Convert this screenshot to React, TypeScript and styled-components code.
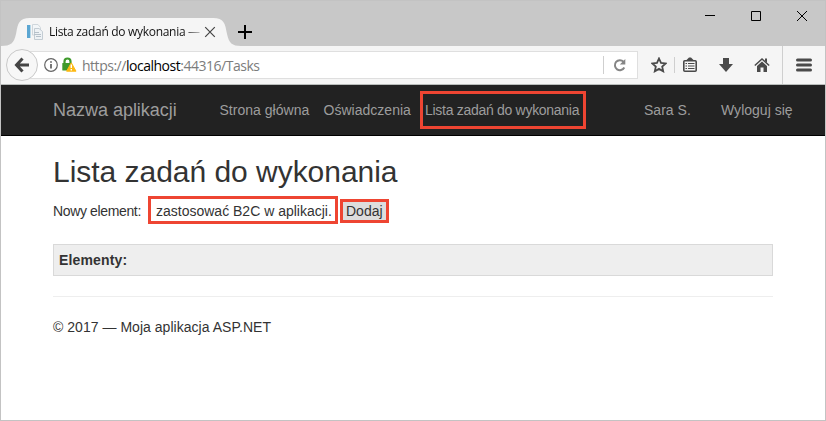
import React from "react";
import styled, { createGlobalStyle } from "styled-components";

const Global = createGlobalStyle`
  * { box-sizing: border-box; }
  body { margin: 0; background: #fff; }
`;

const Window = styled.div`
  width: 826px;
  height: 421px;
  border: 1px solid #c3c3c3;
  background: #fff;
  overflow: hidden;
  display: flex;
  flex-direction: column;
  font-family: "Liberation Sans", Arial, sans-serif;
  font-size: 14px;
  line-height: 20px;
  color: #333;
`;

const TitleBar = styled.div`
  height: 45px;
  flex: none;
  background: #c8c8c8;
  display: flex;
  align-items: flex-end;
`;

const Tab = styled.div`
  position: relative;
  width: 240px;
  height: 28px;
  display: flex;
  align-items: center;
  padding-left: 26px;
`;

const TabShape = styled.svg`
  position: absolute;
  inset: 0;
`;

const TabContent = styled.div`
  position: relative;
  display: flex;
  align-items: center;
`;

const TabTitle = styled.span`
  width: 155px;
  margin-left: 6px;
  white-space: nowrap;
  font: 12px/20px "Open Sans", "Noto Sans", sans-serif;
  letter-spacing: -0.3px;
  color: #111;
  mask-image: linear-gradient(to right, #000 134px, transparent 158px);
`;

const NewTab = styled.svg`
  margin: 0 0 6px -4px;
`;

const WindowControls = styled.div`
  margin-left: auto;
  align-self: flex-start;
  display: flex;
  gap: 34px;
  padding: 9px 17px 0 0;
`;

const Toolbar = styled.div`
  height: 38px;
  flex: none;
  background: #f5f5f5;
  display: flex;
  align-items: center;
  padding-left: 5px;
`;

const BackButton = styled.div`
  position: relative;
  z-index: 1;
  width: 32px;
  height: 32px;
  flex: none;
  border-radius: 50%;
  border: 1px solid #c9c9c9;
  background: #f7f7f7;
  display: flex;
  align-items: center;
  justify-content: center;
`;

const AddressBar = styled.div`
  width: 616px;
  height: 28px;
  flex: none;
  margin-left: -16px;
  padding-left: 21px;
  background: #fff;
  border: 1px solid #dfdfdf;
  display: flex;
  align-items: center;
`;

const LockIcon = styled.svg`
  margin-left: 3px;
`;

const Url = styled.span`
  margin-left: 5px;
  flex: 1;
  font: 14px/20px "Open Sans", "Noto Sans", sans-serif;
  letter-spacing: -0.48px;
  color: #7c7c7c;
  white-space: nowrap;
  padding-top: 2px;
`;

const Host = styled.span`
  color: #000;
`;

const Divider = styled.span<{ $h: number }>`
  width: 1px;
  flex: none;
  height: ${(p) => p.$h}px;
  background: #cfcfcf;
`;

const Reload = styled.svg`
  margin: 0 9px 0 8px;
`;

const Actions = styled.div`
  flex: 1;
  height: 100%;
  display: flex;
  align-items: center;
  padding: 0 13px;
`;

const ActionGroup = styled.div<{ $gap: number; $pad: string }>`
  display: flex;
  gap: ${(p) => p.$gap}px;
  padding: ${(p) => p.$pad};
`;

const NavBar = styled.nav`
  height: 52px;
  flex: none;
  background: #222;
  border-top: 1px solid #b9bdbb;
  border-bottom: 1px solid #000;
  display: flex;
  align-items: center;
  padding-left: 52px;
  color: #9d9d9d;
  white-space: nowrap;
`;

const Brand = styled.span`
  width: 166.5px;
  font-size: 18px;
  letter-spacing: -0.02px;
`;

const NavItem = styled.span<{ $w: number }>`
  width: ${(p) => p.$w}px;
  letter-spacing: 0.02px;
`;

const Highlight = styled.span<{ $w: number; $h: number }>`
  width: ${(p) => p.$w}px;
  height: ${(p) => p.$h}px;
  flex: none;
  border: 3px solid #ee4532;
  display: flex;
  align-items: center;
  white-space: nowrap;
`;

const NavHighlight = styled(Highlight)`
  padding-left: 2px;
  margin-right: 58px;
  letter-spacing: -0.29px;
`;

const Main = styled.main`
  width: 720px;
  margin-left: 52px;
`;

const Heading = styled.h1`
  margin: 19px 0 0;
  font-size: 30px;
  font-weight: 400;
  line-height: 33px;
  letter-spacing: -0.03px;
  white-space: nowrap;
`;

const Form = styled.div`
  display: flex;
  align-items: center;
  height: 28px;
  margin-top: 8px;
`;

const Label = styled.span`
  width: 95px;
  padding-top: 2px;
  letter-spacing: -0.36px;
`;

const Input = styled(Highlight)`
  padding: 2px 0 0 5px;
  margin-right: 2px;
`;

const AddButton = styled(Highlight)`
  background: #ddd;
  padding-left: 3px;
  margin-top: 1px;
`;

const ListHeader = styled.div`
  height: 32px;
  margin-top: 20px;
  padding-left: 5px;
  background: #eee;
  border: 1px solid #d9d9d9;
  font-weight: 700;
  letter-spacing: 0.16px;
  display: flex;
  align-items: center;
`;

const Footer = styled.footer`
  margin-top: 20px;
  padding-top: 20px;
  border-top: 1px solid #eee;
  letter-spacing: 0.03px;
`;

const ink = "#4a4a4a";

export default function App() {
  return (
    <>
      <Global />
      <Window>
        <TitleBar>
          <Tab>
            <TabShape width="240" height="28" viewBox="0 0 240 28">
              <path d="M0 28C10 28 13 25 15 16C17 5 18 0 29 0H212C223 0 224 5 226 16C228 25 231 28 240 28Z" fill="#f5f5f5" />
            </TabShape>
            <TabContent>
              <svg width="16" height="16" viewBox="0 0 16 16">
                <path d="M0 1H3V14H0Z" fill="#5ba6d2" />
                <path d="M3.500 1V14" stroke="#b9d8e8" />
                <path d="M5.500 .5H11L13.500 3.500V11H5.500Z" fill="#f3f6f8" stroke="#d0d7dc" />
                <path d="M7.500 4.500H12L15.500 7.500V15.500H7.500Z" fill="#eef2f5" stroke="#c3ccd3" />
                <path d="M7 8.500H12M7 10.500H14M9 12.500H14" stroke="#b6c1ca" />
              </svg>
              <TabTitle>Lista zadań do wykonania —</TabTitle>
              <svg width="12" height="12" viewBox="0 0 12 12">
                <path d="M1.200 1.200L10.800 10.800M10.800 1.200L1.200 10.800" stroke="#444" strokeWidth="1.200" />
              </svg>
            </TabContent>
          </Tab>
          <NewTab width="16" height="16" viewBox="0 0 16 16">
            <path d="M8 1V15M1 8H15" stroke="#000" strokeWidth="2" />
          </NewTab>
          <WindowControls>
            <svg width="12" height="12" viewBox="0 0 12 12"><path d="M1 5.500H11" stroke="#000" /></svg>
            <svg width="12" height="12" viewBox="0 0 12 12"><path d="M1.500 1.500H10.500V10.500H1.500Z" fill="none" stroke="#000" /></svg>
            <svg width="12" height="12" viewBox="0 0 12 12"><path d="M1 1L11 11M11 1L1 11" stroke="#000" /></svg>
          </WindowControls>
        </TitleBar>

        <Toolbar>
          <BackButton>
            <svg width="16" height="16" viewBox="0 0 16 16">
              <path d="M8.500 1.500L2.500 8L8.500 14.500M3 8H15" fill="none" stroke="#454545" strokeWidth="3" />
            </svg>
          </BackButton>
          <AddressBar>
            <svg width="14" height="14" viewBox="0 0 14 14">
              <circle cx="7" cy="7" r="6.300" fill="none" stroke="#666" strokeWidth="1.200" />
              <path d="M7 6V10.500M7 3.200V4.800" stroke="#555" strokeWidth="1.600" />
            </svg>
            <LockIcon width="16" height="16" viewBox="0 0 16 16">
              <path d="M3.500 7V4.500a3 3 0 0 1 6 0V7" fill="none" stroke="#3f9a2b" strokeWidth="2.200" />
              <rect x="1.300" y="6" width="9" height="7.500" rx=".5" fill="#3f9a2b" />
              <path d="M10.300 5.800L15 14.200H5.600Z" fill="#fdb913" stroke="#fdb913" strokeLinejoin="round" />
              <path d="M10.300 7.500V11M10.300 12V13.500" stroke="#fff" strokeWidth="1.400" />
            </LockIcon>
            <Url>https://<Host>localhost</Host>:44316/Tasks</Url>
            <Divider $h={18} />
            <Reload width="16" height="16" viewBox="0 0 16 16">
              <path d="M12.300 10.600A5 5 0 1 1 11.500 4.700" fill="none" stroke="#858585" strokeWidth="2" />
              <path d="M13.300 2V7.500H7.800Z" fill="#858585" />
            </Reload>
          </AddressBar>
          <Actions>
            <svg width="16" height="16" viewBox="0 0 16 16">
              <path d="M8 1.500L10 5.900L14.700 6.400L11.200 9.600L12.200 14.300L8 11.900L3.800 14.300L4.800 9.600L1.300 6.400L6 5.900Z" fill="none" stroke={ink} strokeWidth="1.800" />
            </svg>
            <ActionGroup $gap={0} $pad="0 7px 0 7px">
              <Divider $h={16} />
            </ActionGroup>
            <ActionGroup $gap={20} $pad="0 12px 0 0">
              <svg width="16" height="16" viewBox="0 0 16 16">
                <rect x="1.800" y="3.800" width="12.400" height="10.400" rx="1" fill="#f5f5f5" stroke={ink} strokeWidth="1.600" />
                <path d="M3.500 4L7 .5H9L12.500 4Z" fill={ink} />
                <path d="M3.500 6.500H5M6 6.500H12.500M3.500 9H5M6 9H12.500M3.500 11.500H5M6 11.500H12.500" stroke={ink} strokeWidth="1.200" />
              </svg>
              <svg width="16" height="16" viewBox="0 0 16 16">
                <path d="M5 1H11V7H15L8 15L1 7H5Z" fill={ink} />
              </svg>
              <svg width="16" height="16" viewBox="0 0 16 16">
                <path d="M.8 8.500L8 2L15.200 8.500" fill="none" stroke={ink} strokeWidth="1.500" />
                <path d="M3 9L8 4.500L13 9V15H9.500V10.500H6.500V15H3Z" fill={ink} />
                <path d="M11 1.500H13V6L11 4Z" fill={ink} />
              </svg>
            </ActionGroup>
            <Divider $h={38} />
            <ActionGroup $gap={0} $pad="0 0 0 13px">
              <svg width="16" height="14" viewBox="0 0 16 14">
                <path d="M1.500 2H14.500M1.500 7H14.500M1.500 12H14.500" stroke={ink} strokeWidth="3" strokeLinecap="round" />
              </svg>
            </ActionGroup>
          </Actions>
        </Toolbar>

        <NavBar>
          <Brand>Nazwa aplikacji</Brand>
          <NavItem $w={104}>Strona główna</NavItem>
          <NavItem $w={96.5}>Oświadczenia</NavItem>
          <NavHighlight $w={166} $h={38}>Lista zadań do wykonania</NavHighlight>
          <NavItem $w={77}>Sara S.</NavItem>
          <NavItem $w={80}>Wyloguj się</NavItem>
        </NavBar>

        <Main>
          <Heading>Lista zadań do wykonania</Heading>
          <Form>
            <Label>Nowy element:</Label>
            <Input $w={190} $h={28}>zastosować B2C w aplikacji.</Input>
            <AddButton $w={49} $h={24}>Dodaj</AddButton>
          </Form>
          <ListHeader>Elementy:</ListHeader>
          <Footer>© 2017 — Moja aplikacja ASP.NET</Footer>
        </Main>
      </Window>
    </>
  );
}
